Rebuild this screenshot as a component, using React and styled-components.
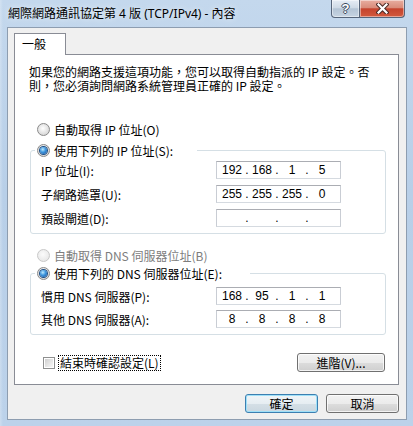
import React from 'react';
import styled, { createGlobalStyle } from 'styled-components';

const GlobalStyle = createGlobalStyle`
  html, body { margin: 0; padding: 0; background: #fff; }
  body {
    font-family: "Noto Sans CJK TC", "Noto Sans", sans-serif;
    font-size: 12px;
    color: #000;
  }
  * { box-sizing: border-box; }
`;

const Window = styled.div`
  width: 413px;
  height: 426px;
  display: flex;
  flex-direction: column;
  overflow: hidden;
  background:
    linear-gradient(90deg, rgba(255,255,255,0.25) 0px, rgba(255,255,255,0) 3px),
    linear-gradient(180deg, #c4d8ed 0%, #b8cfe8 45%, #bcd2ea 100%);
`;

const TitleBar = styled.div`
  height: 27px;
  flex: none;
  display: flex;
  align-items: flex-start;
`;

const Title = styled.div`
  flex: 1;
  padding-left: 8px;
  line-height: 27px;
  white-space: nowrap;
  font-family: "Noto Sans", "Noto Sans CJK TC", sans-serif;
  font-size: 12px;
  text-shadow: 0 0 6px rgba(255, 255, 255, 0.8);
`;

const CaptionButtons = styled.div`
  display: flex;
  margin-right: 8px;
`;

const CaptionButton = styled.div`
  width: ${p => (p.$close ? 45 : 29)}px;
  height: 18px;
  display: flex;
  align-items: center;
  justify-content: center;
  border: 1px solid #56657a;
  border-top: none;
  border-left: ${p => (p.$close ? 'none' : '1px solid #56657a')};
  border-radius: ${p => (p.$close ? '0 0 4px 0' : '0 0 0 4px')};
  background: ${p =>
    p.$close
      ? 'linear-gradient(180deg, #e8ada0 0%, #d98c7a 45%, #c5432d 52%, #d2593d 100%)'
      : 'linear-gradient(180deg, #e6edf5 0%, #cfdae6 45%, #b4c4d5 52%, #c6d4e2 100%)'};
  box-shadow: inset 0 0 0 1px rgba(255, 255, 255, 0.45);
`;

const HelpGlyph = styled.span`
  font-family: "Liberation Sans", sans-serif;
  font-weight: bold;
  font-size: 13px;
  line-height: 1;
  color: #fff;
  text-shadow: 1px 0 #3b4b5e, -1px 0 #3b4b5e, 0 1px #3b4b5e, 0 -1px #3b4b5e;
`;

const Client = styled.div`
  flex: 1;
  margin: 0 6px 6px 7px;
  padding: 5px 7px 0 6px;
  background: #f0f0f0;
  border: 1px solid #8d9db0;
  display: flex;
  flex-direction: column;
`;

const TabStrip = styled.div`
  display: flex;
  height: 22px;
`;

const Tab = styled.div`
  width: 52px;
  padding-left: 7px;
  line-height: 20px;
  background: #fff;
  border: 1px solid #898c95;
  border-bottom: none;
`;

const TabFill = styled.div`
  flex: 1;
  border-bottom: 1px solid #898c95;
`;

const Pane = styled.div`
  background: #fff;
  border: 1px solid #898c95;
  border-top: none;
  padding: 10px 0 12px;
  display: flex;
  flex-direction: column;
`;

const Description = styled.p`
  margin: 0 0 0 14px;
  line-height: 14px;
  white-space: nowrap;
`;

const RadioRow = styled.div`
  display: flex;
  align-items: center;
  gap: 4px;
  height: 18px;
  margin: ${p => p.$top}px 0 0 22px;
  color: ${p => (p.$disabled ? '#7d7d7d' : '#000')};
`;

const Radio = styled.span`
  flex: none;
  width: 13px;
  height: 13px;
  border-radius: 50%;
  display: inline-flex;
  align-items: center;
  justify-content: center;
  border: 1px solid ${p => (p.$disabled ? '#c8c8c8' : '#8a8a8a')};
  background: ${p =>
    p.$disabled
      ? 'radial-gradient(circle at 45% 40%, #fbfbfb 0%, #ececec 60%, #e0e0e0 100%)'
      : 'radial-gradient(circle at 45% 40%, #ffffff 0%, #e2e2e2 55%, #c9c9c9 100%)'};

  &::after {
    content: '';
    display: ${p => (p.$checked ? 'block' : 'none')};
    width: 7px;
    height: 7px;
    border-radius: 50%;
    background: radial-gradient(circle at 40% 35%, #bfeaff 0%, #3c95dd 45%, #174f9b 100%);
    box-shadow: 0 0 0 1px #1d4f86;
  }
`;

const Group = styled.fieldset`
  margin: ${p => p.$top}px 12px 0 15px;
  padding: ${p => p.$padTop}px 10px 6px;
  min-width: 0;
  border: 1px solid #d5dfe5;
  border-radius: 3px;
  display: flex;
  flex-direction: column;
  gap: ${p => p.$gap}px;
`;

const Legend = styled.legend`
  margin-left: -6px;
  padding: 0 ${p => p.$padRight}px 0 2px;
  height: 18px;
  display: flex;
  align-items: center;
  gap: 4px;
`;

const FieldRow = styled.div`
  display: grid;
  grid-template-columns: 175px 125px;
  align-items: center;
  height: 18px;
`;

const IpBox = styled.div`
  width: 125px;
  height: 18px;
  display: flex;
  align-items: center;
  padding-left: 2px;
  line-height: 16px;
  background: #fff;
  border: 1px solid #abadb3;
  border-color: #abadb3 #c9cdd4 #d5dae0 #c9cdd4;
  font-family: "Liberation Sans", "Noto Sans CJK TC", sans-serif;
`;

const Octet = styled.span`
  width: 26px;
  text-align: center;
`;

const Dot = styled.span`
  width: 4px;
  text-align: center;
`;

const OptionsRow = styled.div`
  display: flex;
  align-items: center;
  justify-content: space-between;
  height: 19px;
  margin: 18px 13px 0 28px;
`;

const CheckLabel = styled.div`
  display: flex;
  align-items: center;
  gap: 3px;
`;

const CheckBox = styled.span`
  width: 12px;
  height: 12px;
  border: 1px solid #8e8f8f;
  background: #fff;
  padding: 1px;

  &::after {
    content: '';
    display: block;
    width: 100%;
    height: 100%;
    background: linear-gradient(135deg, #cfcfcf 0%, #e8e8e8 60%, #f6f6f6 100%);
  }
`;

const FocusText = styled.span`
  border: 1px dotted #000;
  padding: 0 1px;
  line-height: 14px;
`;

const Button = styled.div`
  width: ${p => p.$w}px;
  height: 19px;
  display: flex;
  align-items: center;
  justify-content: center;
  border-radius: 3px;
  border: 1px solid ${p => (p.$default ? '#3c7fb1' : '#707070')};
  background: ${p =>
    p.$default
      ? 'linear-gradient(180deg, #f0f5f8 0%, #e6edf2 50%, #d5dfe6 50%, #cad7e0 100%)'
      : 'linear-gradient(180deg, #f2f2f2 0%, #ebebeb 50%, #dddddd 50%, #cfcfcf 100%)'};
  box-shadow: inset 0 0 0 1px ${p => (p.$default ? '#9fe0f8' : 'rgba(255,255,255,0.75)')};
`;

const DialogButtons = styled.div`
  display: flex;
  justify-content: flex-end;
  gap: 8px;
  margin-top: 9px;
`;

function CloseGlyph() {
  return (
    <svg width="13" height="11" viewBox="0 0 13 11">
      <path d="M2.5 1.5 L10.5 9.5 M10.5 1.5 L2.5 9.5" stroke="#4b2a26" strokeWidth="4.2" strokeLinecap="square" />
      <path d="M2.5 1.5 L10.5 9.5 M10.5 1.5 L2.5 9.5" stroke="#ffffff" strokeWidth="2.2" strokeLinecap="square" />
    </svg>
  );
}

function IpField({ value }) {
  const parts = value ? value.split('.') : ['', '', '', ''];
  return (
    <IpBox>
      {parts.map((part, i) => (
        <React.Fragment key={i}>
          <Octet>{part}</Octet>
          {i < 3 && <Dot>.</Dot>}
        </React.Fragment>
      ))}
    </IpBox>
  );
}

function Field({ label, value }) {
  return (
    <FieldRow>
      <span>{label}</span>
      <IpField value={value} />
    </FieldRow>
  );
}

export default function App() {
  return (
    <>
      <GlobalStyle />
      <Window>
        <TitleBar>
          <Title>網際網路通訊協定第 4 版 (TCP/IPv4) - 內容</Title>
          <CaptionButtons>
            <CaptionButton><HelpGlyph>?</HelpGlyph></CaptionButton>
            <CaptionButton $close><CloseGlyph /></CaptionButton>
          </CaptionButtons>
        </TitleBar>
        <Client>
          <TabStrip>
            <Tab>一般</Tab>
            <TabFill />
          </TabStrip>
          <Pane>
            <Description>
              如果您的網路支援這項功能，您可以取得自動指派的 IP 設定。否<br />
              則，您必須詢問網路系統管理員正確的 IP 設定。
            </Description>

            <RadioRow $top={27}>
              <Radio />
              自動取得 IP 位址(O)
            </RadioRow>
            <Group $top={3} $padTop={2} $gap={6}>
              <Legend $padRight={24}>
                <Radio $checked />
                使用下列的 IP 位址(S):
              </Legend>
              <Field label="IP 位址(I):" value="192.168.1.5" />
              <Field label="子網路遮罩(U):" value="255.255.255.0" />
              <Field label="預設閘道(D):" />
            </Group>

            <RadioRow $top={12} $disabled>
              <Radio $disabled />
              自動取得 DNS 伺服器位址(B)
            </RadioRow>
            <Group $top={0} $padTop={5} $gap={5}>
              <Legend $padRight={28}>
                <Radio $checked />
                使用下列的 DNS 伺服器位址(E):
              </Legend>
              <Field label="慣用 DNS 伺服器(P):" value="168.95.1.1" />
              <Field label="其他 DNS 伺服器(A):" value="8.8.8.8" />
            </Group>

            <OptionsRow>
              <CheckLabel>
                <CheckBox />
                <FocusText>結束時確認設定(L)</FocusText>
              </CheckLabel>
              <Button $w={88}>進階(V)...</Button>
            </OptionsRow>
          </Pane>
          <DialogButtons>
            <Button $w={73} $default>確定</Button>
            <Button $w={73}>取消</Button>
          </DialogButtons>
        </Client>
      </Window>
    </>
  );
}
